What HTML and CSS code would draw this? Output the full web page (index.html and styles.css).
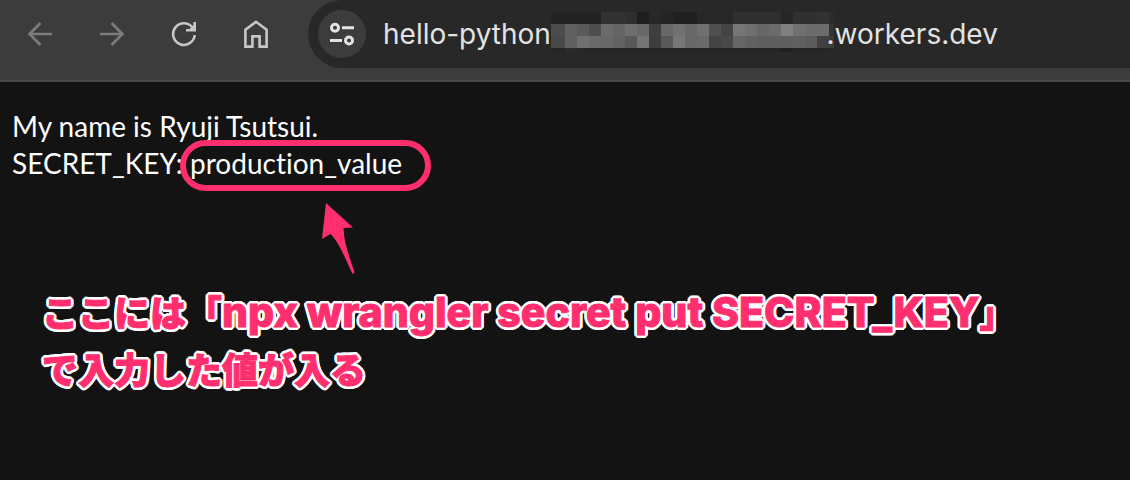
FILE: index.html
```html
<!DOCTYPE html>
<html lang="ja">
<head>
    <meta charset="UTF-8">
    <meta name="viewport" content="width=device-width, initial-scale=1.0">
    <title>hello-python</title>
    <link rel="stylesheet" href="styles.css">
</head>
<body>

<header class="toolbar">
    <nav class="nav-buttons">
        <button class="nav-button disabled" aria-label="Back">
            <svg width="28" height="28" viewBox="0 0 28 28"><path d="M26 14H4M14.500 3L3.500 14L14.500 25"/></svg>
        </button>
        <button class="nav-button disabled" aria-label="Forward">
            <svg width="28" height="28" viewBox="0 0 28 28"><path d="M2 14H24M13.500 3L24.500 14L13.500 25"/></svg>
        </button>
        <button class="nav-button" aria-label="Reload">
            <svg width="28" height="28" viewBox="0 0 28 28"><path d="M24.700 15A10.800 10.800 0 1 1 22.500 7.500L24 9.500M16 10.300H24.700V2"/><path class="tip" d="M18 10.300H24.700V4Z"/></svg>
        </button>
        <button class="nav-button" aria-label="Home">
            <svg width="28" height="28" viewBox="0 0 28 28"><path d="M3.400 26.600V9.600L14 1.800L24.600 9.600V26.600H17.600V16.400H10.400V26.600Z"/></svg>
        </button>
    </nav>
    <div class="address-bar">
        <button class="site-info" aria-label="Site information">
            <svg width="28" height="28" viewBox="0 0 28 28">
                <circle cx="7" cy="7.700" r="3.500"/>
                <path d="M14 7.700H26M2 20.500H14"/>
                <circle cx="21" cy="20.500" r="3.500"/>
            </svg>
        </button>
        <div class="url-field">
            <svg class="mosaic" id="mosaic" width="283" height="40" viewBox="0 0 283 40" shape-rendering="crispEdges" aria-hidden="true"></svg>
            <input class="url" type="text" aria-label="Address" value="hello-python&nbsp;&nbsp;&nbsp;&nbsp;&nbsp;&nbsp;&nbsp;&nbsp;&nbsp;&nbsp;&nbsp;&nbsp;&nbsp;&nbsp;&nbsp;&nbsp;&nbsp;&nbsp;&nbsp;&nbsp;&nbsp;&nbsp;&nbsp;&nbsp;&nbsp;&nbsp;&nbsp;&nbsp;&nbsp;&nbsp;&nbsp;&nbsp;&nbsp;&nbsp;&nbsp;.workers.dev">
        </div>
    </div>
</header>

<main class="page">
    <p class="output">
        My name is Ryuji Tsutsui.<br>
        SECRET_KEY: <span class="circled">production_value</span>
    </p>
    <svg class="arrow" width="34" height="72" viewBox="0 0 34 72"><path d="M4 0L31 24.500L21.500 25C22 40 27 53 32.500 69Q32 72 30 70C23 55 17 39 8.500 31L0 36Z"/></svg>
    <p class="caption">ここには「<span class="command">npx wrangler secret put SECRET_KEY</span>」<br>で入力した値が入る</p>
</main>

<script>
    // Gray levels of the blocks that hide the account name
    const rows = [
        { y: 0, h: 12, levels: [35, 35, 35, 35, 50, 50, 46, 30, 40, 37, 32, 32, 39, 39, 39, 48, 48, 48, 48, 38, 48, 48, 50, 44] },
        { y: 12, h: 12, levels: [76, 96, 90, 78, 107, 100, 110, 104, 62, 104, 112, 103, 112, 80, 68, 118, 112, 102, 108, 128, 112, 108, 108, 50] },
        { y: 24, h: 12, levels: [72, 96, 112, 106, 104, 98, 88, 116, 62, 88, 118, 104, 106, 68, 72, 102, 96, 94, 94, 94, 96, 92, 64, 60] },
        { y: 36, h: 4, levels: [36, 44, 38, 36, 36, 36, 36, 36, 36, 36, 36, 36, 36, 36, 36, 36, 36, 36, 36, 32, 36, 36, 38, 38] }
    ];
    const mosaic = document.getElementById("mosaic");

    rows.forEach(row => {
        row.levels.forEach((level, i) => {
            const rect = document.createElementNS("http://www.w3.org/2000/svg", "rect");
            rect.setAttribute("x", i === 0 ? 0 : 2 + i * 12);
            rect.setAttribute("y", row.y);
            rect.setAttribute("width", i === 0 ? 14 : 12);
            rect.setAttribute("height", row.h);
            rect.setAttribute("fill", `rgb(${level}, ${level}, ${level})`);
            mosaic.appendChild(rect);
        });
    });
</script>

</body>
</html>
```
FILE: styles.css
```css
body {
    margin: 0;
    min-height: 100vh;
    background: #131313;
    color: #fff;
    overflow-x: hidden;
}

.toolbar {
    display: flex;
    padding-bottom: 12px;
    background: #3c3c3c;
    border-bottom: 2px solid #484848;
}

.nav-buttons {
    display: flex;
    align-items: center;
    gap: 24px;
    padding: 0 28px 0 16px;
}

button {
    display: flex;
    align-items: center;
    justify-content: center;
    flex-shrink: 0;
    width: 48px;
    height: 48px;
    padding: 0;
    border: none;
    border-radius: 50%;
    background: none;
    color: #c7c7c7;
    cursor: pointer;
}

button svg {
    fill: none;
    stroke: currentColor;
    stroke-width: 2.6;
}

button .tip {
    fill: currentColor;
    stroke: none;
}

.nav-button.disabled {
    color: #7c7c7c;
}

.address-bar {
    flex: 1;
    display: flex;
    align-items: center;
    gap: 17px;
    height: 68px;
    padding-left: 10px;
    border-radius: 34px 0 0 34px;
    background: #282828;
}

.site-info {
    background: #3c3c3c;
    color: #e3e3e3;
}

.site-info svg {
    stroke-width: 3;
}

.url-field {
    position: relative;
    flex: 1;
}

.url {
    display: block;
    position: relative;
    box-sizing: border-box;
    width: 100%;
    height: 40px;
    padding: 0;
    border: none;
    outline: none;
    background: none;
    color: #e3e3e3;
    font-family: Inter, sans-serif;
    font-size: 28px;
}

/* Fills the blank middle of the address */
.mosaic {
    position: absolute;
    left: 168px;
    top: -2px;
}

.page {
    padding: 26px 12px;
}

.output {
    margin: 0;
    font-family: Lato, sans-serif;
    font-size: 28px;
    line-height: 37px;
    font-variant-ligatures: none;
}

.circled {
    position: relative;
}

.circled::after {
    content: "";
    position: absolute;
    inset: -6px -29px -11px -10px;
    border: 6px solid #ff2e6e;
    border-radius: 26px;
}

.arrow {
    display: block;
    margin: 21px 0 9px 310px;
    fill: #ff2e6e;
}

.caption {
    margin: 0;
    padding-left: 30px;
    font-family: Inter, "Noto Sans CJK JP", sans-serif;
    font-size: 36px;
    font-weight: 900;
    line-height: 57px;
    color: #ff2e6e;
    -webkit-text-stroke: 1px #ff2e6e;
    text-shadow:
        3px 0 #fff, -3px 0 #fff, 0 3px #fff, 0 -3px #fff,
        2px 2px #fff, -2px 2px #fff, 2px -2px #fff, -2px -2px #fff,
        3px 1px #fff, -3px 1px #fff, 3px -1px #fff, -3px -1px #fff,
        1px 3px #fff, -1px 3px #fff, 1px -3px #fff, -1px -3px #fff;
}

.command {
    font-size: 41px;
    font-weight: 800;
}
```
